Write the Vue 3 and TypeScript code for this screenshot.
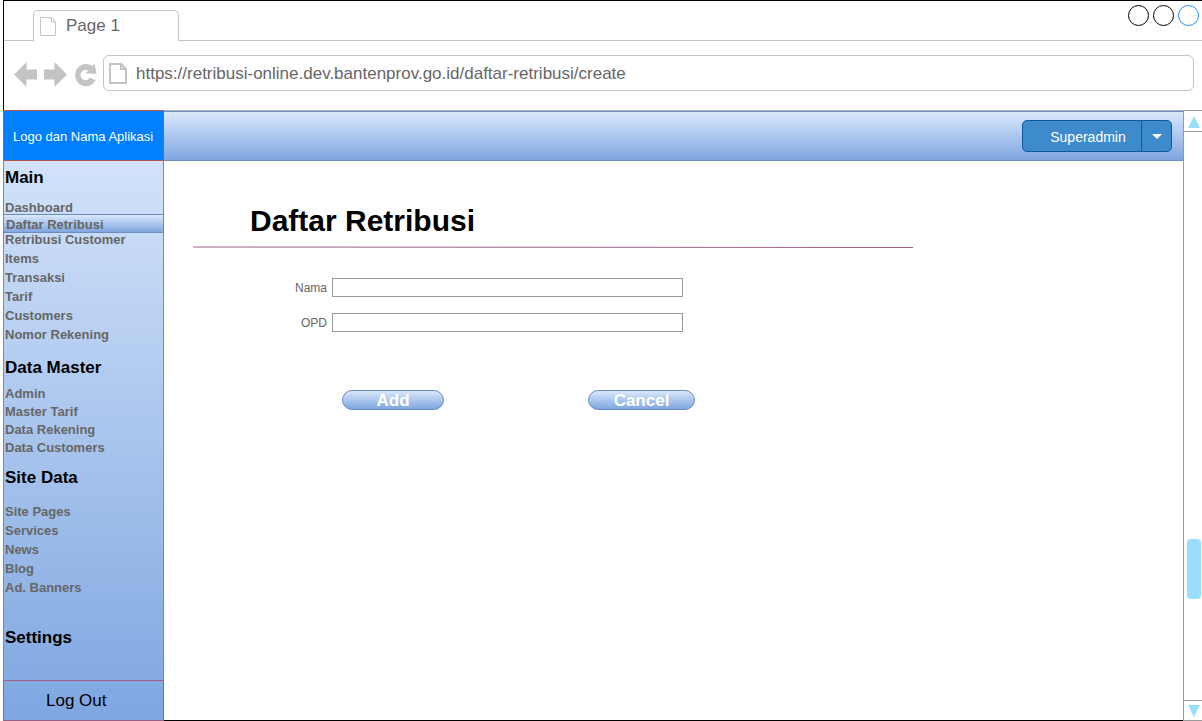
<script setup lang="ts">
import { ref } from 'vue'

interface MenuGroup {
  title: string
  kind: string
  items: string[]
}

const activeItem = 'Daftar Retribusi'

const groups: MenuGroup[] = [
  {
    title: 'Main',
    kind: 'main-group',
    items: [
      'Dashboard',
      'Daftar Retribusi',
      'Retribusi Customer',
      'Items',
      'Transaksi',
      'Tarif',
      'Customers',
      'Nomor Rekening',
    ],
  },
  {
    title: 'Data Master',
    kind: 'master-group',
    items: ['Admin', 'Master Tarif', 'Data Rekening', 'Data Customers'],
  },
  {
    title: 'Site Data',
    kind: 'site-group',
    items: ['Site Pages', 'Services', 'News', 'Blog', 'Ad. Banners'],
  },
  { title: 'Settings', kind: 'settings-group', items: [] },
]

const url = ref('https://retribusi-online.dev.bantenprov.go.id/daftar-retribusi/create')
const nama = ref('')
const opd = ref('')

function reset() {
  nama.value = ''
  opd.value = ''
}
</script>

<template>
  <div class="window">
    <header class="chrome">
      <div class="tabs">
        <div class="tab">
          <svg class="tab-icon" width="16" height="19" viewBox="0 0 16 19" aria-hidden="true">
            <path d="M.5.5H11.5L15.5 5V18.5H.5ZM11.5.5V5H15.5" fill="none" stroke="#c4c4c4" />
          </svg>
          <span>Page 1</span>
        </div>
        <div class="controls">
          <button type="button" class="dot" aria-label="Minimize"></button>
          <button type="button" class="dot" aria-label="Maximize"></button>
          <button type="button" class="dot dot-close" aria-label="Close"></button>
        </div>
      </div>
      <div class="toolbar">
        <button type="button" class="nav-button" aria-label="Back">
          <svg width="23" height="25" viewBox="0 0 23 25"><path d="M0 12.5 12.5 0V7.5H23V17.5H12.5V25Z" fill="#c4c4c4" /></svg>
        </button>
        <button type="button" class="nav-button" aria-label="Forward">
          <svg width="23" height="25" viewBox="0 0 23 25"><path d="M23 12.5 10.5 0V7.5H0V17.5H10.5V25Z" fill="#c4c4c4" /></svg>
        </button>
        <button type="button" class="nav-button" aria-label="Reload">
          <svg width="23" height="25" viewBox="0 0 23 25">
            <path d="M18.3 4 20.7 1.8 22.6 12 11.3 11.2 14.3 8.6C10.5 6.6 6.6 9.200 6.600 13C6.600 18 13 20 15.700 15.400L21.500 18.200C19.300 22.200 16 24.200 12 24.200C5.800 24.200 1.200 19.200 1.200 13C1.200 6.800 5.800 1.900 12 1.900C14.500 1.900 16.500 2.600 18.300 4Z" fill="#c4c4c4" />
          </svg>
        </button>
        <label class="address">
          <svg width="18" height="21" viewBox="0 0 18 21" aria-hidden="true">
            <path d="M1 1H12L17 6V20H1ZM12 1V6H17" fill="none" stroke="#c4c4c4" stroke-width="2" />
          </svg>
          <input v-model="url" type="text" aria-label="Address" />
        </label>
      </div>
    </header>

    <div class="page">
      <aside class="sidebar">
        <div class="logo">Logo dan Nama Aplikasi</div>
        <nav class="menu">
          <section v-for="group in groups" :key="group.title" :class="group.kind">
            <h2>{{ group.title }}</h2>
            <ul v-if="group.items.length">
              <li v-for="item in group.items" :key="item" :class="{ active: item === activeItem }">
                <a href="#">{{ item }}</a>
              </li>
            </ul>
          </section>
        </nav>
        <a class="logout" href="#">Log Out</a>
      </aside>

      <div class="content">
        <div class="topbar">
          <div class="split">
            <button type="button" class="user">Superadmin</button>
            <button type="button" class="caret" aria-label="Open user menu">
              <svg width="10" height="5" viewBox="0 0 10 5"><path d="M0 0H10L5 5Z" fill="#fff" /></svg>
            </button>
          </div>
        </div>
        <main>
          <h1>Daftar Retribusi</h1>
          <svg class="rule" viewBox="0 0 1440 4" preserveAspectRatio="none" aria-hidden="true">
            <path d="M0 2 1440 3" stroke="#996185" stroke-width="2" />
          </svg>
          <form @submit.prevent>
            <div class="field">
              <label for="nama">Nama</label>
              <input id="nama" v-model="nama" type="text" />
            </div>
            <div class="field">
              <label for="opd">OPD</label>
              <input id="opd" v-model="opd" type="text" />
            </div>
            <div class="actions">
              <button type="submit">Add</button>
              <button type="button" @click="reset">Cancel</button>
            </div>
          </form>
        </main>
      </div>

      <div class="scrollbar" aria-hidden="true">
        <div class="arrow arrow-up">
          <svg width="12" height="12" viewBox="0 0 12 12"><path d="M6 0 12 12H0Z" fill="#99ddff" /></svg>
        </div>
        <div class="track"><div class="thumb"></div></div>
        <div class="arrow arrow-down">
          <svg width="12" height="12" viewBox="0 0 12 12"><path d="M0 0H12L6 12Z" fill="#99ddff" /></svg>
        </div>
      </div>
    </div>
  </div>
</template>

<style>
body {
  margin: 0;
  background: #fff;
}
</style>

<style scoped>
* {
  box-sizing: border-box;
}

.window {
  display: flex;
  flex-direction: column;
  min-height: 100vh;
  padding-left: 3px;
  font-family: "Liberation Sans", Arial, sans-serif;
  color: #000;
}

button,
input {
  margin: 0;
  padding: 0;
  font-family: inherit;
}

svg {
  display: block;
  flex: none;
}

.chrome {
  border-top: 1px solid #000;
  border-left: 1px solid #000;
}

.tabs {
  display: flex;
  align-items: flex-end;
  justify-content: space-between;
  height: 40px;
  padding-left: 29px;
  background: linear-gradient(#c4c4c4, #c4c4c4) bottom / 100% 1px no-repeat;
}

.tab {
  display: flex;
  align-items: center;
  gap: 10px;
  width: 146px;
  height: 31px;
  padding: 0 6px;
  border: 1px solid #c4c4c4;
  border-bottom: 0;
  border-radius: 5px 5px 0 0;
  background: #fff;
  color: #666;
  font-size: 17px;
}

.controls {
  display: flex;
  gap: 4px;
  align-self: flex-start;
  padding: 4px 3px 0 0;
}

.dot {
  width: 21px;
  height: 21px;
  border: 1px solid #000;
  border-radius: 50%;
  background: none;
}

.dot-close {
  border-color: #1a90ff;
}

.toolbar {
  display: flex;
  align-items: flex-start;
  height: 69px;
  padding: 14px 8px 0 10px;
}

.nav-button {
  width: 30px;
  padding-top: 7px;
  border: 0;
  background: none;
}

.address {
  display: flex;
  align-items: center;
  flex: 1;
  gap: 9px;
  height: 36px;
  padding: 0 5px;
  margin-left: -1px;
  border: 1px solid #c4c4c4;
  border-radius: 6px;
}

.address input {
  flex: 1;
  min-width: 0;
  height: 34px;
  padding-top: 2px;
  border: 0;
  outline: 0;
  background: none;
  color: #666;
  font-size: 17px;
}

.page {
  display: flex;
  flex: 1;
}

.sidebar {
  display: flex;
  flex-direction: column;
  width: 161px;
  background: linear-gradient(#dae8fc, #7ea6e0);
}

.logo {
  height: 51px;
  padding-left: 9px;
  border: 1px solid #b85450;
  background: #007fff;
  color: #fff;
  font-size: 13px;
  line-height: 51px;
  white-space: nowrap;
}

.menu {
  flex: 1;
  padding-top: 7px;
  border: solid #6c8ebf;
  border-width: 0 1px;
}

h2 {
  margin: 0;
  padding-left: 1px;
  font-size: 17px;
  line-height: 20px;
}

ul {
  margin: 0;
  padding: 0;
  list-style: none;
}

li {
  padding: 0 0 6px 1px;
  font-size: 13px;
  font-weight: bold;
  line-height: 13px;
}

li a {
  color: #666;
  text-decoration: none;
}

.main-group ul {
  padding-top: 13px;
}

.main-group li:first-child {
  padding-bottom: 0;
}

.main-group li.active {
  padding: 2px 0 0 2px;
  border: solid #6c8ebf;
  border-width: 1px 0;
  background: linear-gradient(#dae8fc, #7ea6e0);
  line-height: 15px;
}

.master-group {
  padding-top: 11px;
}

.master-group ul {
  padding-top: 9px;
}

.master-group li {
  padding-bottom: 5px;
}

.site-group {
  padding-top: 9px;
}

.site-group ul {
  padding-top: 17px;
}

.settings-group {
  padding-top: 28px;
}

.logout {
  height: 41px;
  padding-left: 42px;
  border: 1px solid #996185;
  color: #000;
  font-size: 17px;
  line-height: 39px;
  text-decoration: none;
}

.content {
  display: flex;
  flex: 1;
  flex-direction: column;
  min-width: 0;
  border-top: 1px solid #b3b3b3;
  border-bottom: 1px solid #000;
}

.topbar {
  display: flex;
  align-items: center;
  justify-content: flex-end;
  height: 50px;
  padding-right: 11px;
  border: solid #6c8ebf;
  border-width: 1px 0;
  background: linear-gradient(#dae8fc, #7ea6e0);
}

.split {
  display: flex;
  width: 150px;
  height: 32px;
  border: 1px solid #10599c;
  border-radius: 5px;
  background: #3d8bcd;
}

.user {
  flex: 1;
  padding: 2px 0 0 12px;
  border: 0;
  background: none;
  color: #fff;
  font-size: 14px;
}

.caret {
  display: flex;
  align-items: center;
  justify-content: center;
  width: 30px;
  border: 0;
  border-left: 1px solid #10599c;
  background: none;
}

main {
  padding: 40px 29px;
}

h1 {
  margin: 0;
  padding-left: 57px;
  font-size: 30px;
  line-height: 40px;
}

.rule {
  width: 100%;
  max-width: 720px;
  height: 2px;
  margin-top: 5px;
}

form {
  display: flex;
  flex-direction: column;
  gap: 16px;
  max-width: 490px;
  padding-top: 30px;
}

.field {
  display: flex;
  align-items: center;
  gap: 5px;
}

.field label {
  width: 134px;
  color: #666;
  font-size: 12px;
  text-align: right;
}

.field input {
  flex: 1;
  min-width: 0;
  height: 19px;
  padding: 0 4px;
  border: 1px solid #999;
  background: #fff;
  color: #666;
  font-size: 12px;
}

.actions {
  display: flex;
  gap: 144px;
  padding: 42px 0 0 149px;
}

.actions button {
  flex: none;
  width: 102px;
  height: 20px;
  padding-top: 1px;
  border: 1px solid #6c8ebf;
  border-radius: 10px;
  background: linear-gradient(#dae8fc, #7ea6e0);
  color: #fff;
  font-size: 17px;
  font-weight: bold;
  line-height: 18px;
}

.actions button:last-child {
  width: 107px;
}

.scrollbar {
  display: flex;
  flex-direction: column;
  width: 19px;
  padding-top: 1px;
  border: solid #999;
  border-width: 1px 0 1px 1px;
}

.arrow {
  display: flex;
  align-items: center;
  justify-content: center;
  height: 20px;
  padding-left: 1px;
}

.arrow-up {
  border-bottom: 1px solid #999;
}

.arrow-down {
  border-top: 1px solid #999;
}

.track {
  display: flex;
  flex: 1;
  flex-direction: column;
  justify-content: flex-end;
  padding: 0 1px 101px 3px;
}

.thumb {
  height: 60px;
  border-radius: 4px;
  background: #99ddff;
}
</style>
